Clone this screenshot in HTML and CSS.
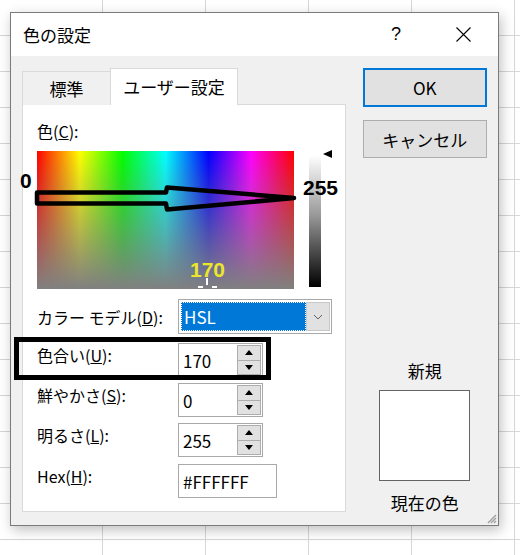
FILE: index.html
```html
<!DOCTYPE html>
<html lang="ja">
<head>
    <meta charset="UTF-8">
    <title>色の設定</title>
    <link rel="stylesheet" href="styles.css">
</head>
<body>
    <div class="dialog">
        <div class="titlebar">
            <span class="title">色の設定</span>
            <span class="help">?</span>
            <svg class="close" width="15" height="15" viewBox="0 0 15 15">
                <path d="M0.5 0.5 L14.5 14.5 M14.5 0.5 L0.5 14.5" stroke="#000" stroke-width="1.1" fill="none"/>
            </svg>
        </div>

        <div class="dialog-body">
            <div class="left">
                <div class="tabs">
                    <div class="tab">標準</div>
                    <div class="tab active">ユーザー設定</div>
                </div>
                <div class="panel">
                    <div class="caption">色(<u>C</u>):</div>

                    <div class="picker">
                        <div class="spectrum">
                            <span class="cursor-v"></span>
                            <span class="cursor-h left"></span>
                            <span class="cursor-h right"></span>
                        </div>
                        <div class="lum"></div>
                        <div class="lum-marker"></div>
                    </div>

                    <div class="form">
                        <div class="form-row model">
                            <label>カラー モデル(<u>D</u>):</label>
                            <div class="select">
                                <div class="selected"><span>HSL</span></div>
                                <div class="drop">
                                    <svg width="10" height="6" viewBox="0 0 10 6">
                                        <path d="M1 1 L5 5 L9 1" stroke="#606060" stroke-width="1" fill="none"/>
                                    </svg>
                                </div>
                            </div>
                        </div>
                        <div class="form-row">
                            <label>色合い(<u>U</u>):</label>
                            <div class="field">
                                <span class="value">170</span>
                                <div class="spinner"><span class="up"></span><span class="down"></span></div>
                            </div>
                        </div>
                        <div class="form-row">
                            <label>鮮やかさ(<u>S</u>):</label>
                            <div class="field">
                                <span class="value">0</span>
                                <div class="spinner"><span class="up"></span><span class="down"></span></div>
                            </div>
                        </div>
                        <div class="form-row">
                            <label>明るさ(<u>L</u>):</label>
                            <div class="field">
                                <span class="value">255</span>
                                <div class="spinner"><span class="up"></span><span class="down"></span></div>
                            </div>
                        </div>
                        <div class="form-row hex">
                            <label>Hex(<u>H</u>):</label>
                            <div class="field wide">
                                <span class="value">#FFFFFF</span>
                            </div>
                        </div>
                    </div>
                </div>
            </div>

            <div class="side">
                <div class="btn btn-ok">OK</div>
                <div class="btn btn-cancel">キャンセル</div>
                <div class="preview-label">新規</div>
                <div class="preview-box"></div>
                <div class="current-label">現在の色</div>
            </div>
        </div>

        <svg class="grip" width="12" height="12" viewBox="0 0 12 12">
            <path d="M11 3 L3 11 M11 6 L6 11 M11 9 L9 11" stroke="#a0a0a0" stroke-width="1.4"/>
        </svg>
    </div>

    <!-- annotations drawn over the screenshot -->
    <svg class="annotations" width="520" height="555" viewBox="0 0 520 555">
        <path d="M37 192.5 L166 192.5 L167 187.5 L294 198 L167 209.5 L166 203.5 L37 203.5 Z"
              fill="none" stroke="#000" stroke-width="4.5" stroke-linejoin="round"/>
        <rect x="16.5" y="339.5" width="252" height="38" fill="none" stroke="#000" stroke-width="5"/>
        <text x="20" y="188" class="note">0</text>
        <text x="303" y="195" class="note">255</text>
        <text x="190" y="277" class="note yellow">170</text>
    </svg>
</body>
</html>
```

FILE: styles.css
```css
* {
    box-sizing: border-box;
}

body {
    margin: 0;
    width: 520px;
    height: 555px;
    overflow: hidden;
    font-family: "Noto Sans CJK JP", sans-serif;
    font-size: 16px;
    color: #000;
    background-color: #fff;
    background-image:
        linear-gradient(to right, transparent 102px, #d6d6d6 102px),
        linear-gradient(to bottom, transparent 35px, #d6d6d6 35px);
    background-size: 103px 36px;
}

.dialog {
    position: relative;
    margin: 12px 0 0 10px;
    width: 489px;
    height: 514px;
    border: 1px solid #7a7a7a;
    background: #f0f0f0;
    box-shadow: 2px 4px 12px rgba(0, 0, 0, 0.25);
    display: flex;
    flex-direction: column;
}

.titlebar {
    height: 43px;
    background: #fff;
    display: flex;
    align-items: center;
    padding-left: 12px;
}

.title {
    font-size: 17px;
}

.help {
    margin-left: auto;
    width: 20px;
    text-align: center;
    font-family: "Liberation Sans", sans-serif;
    font-size: 18px;
}

.close {
    margin-left: 50px;
    margin-right: 27px;
}

.dialog-body {
    display: flex;
    padding: 12px 11px 0 11px;
}

.left {
    width: 325px;
}

.tabs {
    display: flex;
    align-items: flex-end;
    height: 37px;
    margin-bottom: -1px;
    position: relative;
    z-index: 1;
}

.tab {
    height: 34px;
    width: 88px;
    border: 1px solid #d9d9d9;
    border-right: none;
    border-bottom: none;
    background: #f0f0f0;
    display: flex;
    align-items: center;
    justify-content: center;
    font-size: 17px;
}

.tab.active {
    height: 37px;
    width: 128px;
    border-right: 1px solid #d9d9d9;
    background: #fff;
    padding-bottom: 2px;
}

.panel {
    height: 408px;
    border: 1px solid #d9d9d9;
    background: #fff;
    padding-left: 14px;
    padding-top: 15px;
}

.caption {
    line-height: 22px;
}

.picker {
    display: flex;
    margin-top: 9px;
    height: 138px;
}

.spectrum {
    position: relative;
    width: 257px;
    height: 138px;
    background:
        linear-gradient(to bottom, rgba(128, 128, 128, 0), #808080),
        linear-gradient(to right, #ff0000, #ffff00 16.7%, #00ff00 33.3%, #00ffff 50%, #0000ff 66.7%, #ff00ff 83.3%, #ff0000);
}

.cursor-v {
    position: absolute;
    left: 169px;
    top: 127px;
    width: 2px;
    height: 7px;
    background: #fff;
}

.cursor-h {
    position: absolute;
    top: 135px;
    width: 5px;
    height: 2px;
    background: #fff;
}

.cursor-h.left {
    left: 161px;
}

.cursor-h.right {
    left: 175px;
}

.lum {
    width: 12px;
    height: 132px;
    margin-left: 15px;
    margin-top: 4px;
    background: linear-gradient(to bottom, #fff, #9a9a9a 45%, #000);
}

.lum-marker {
    width: 0;
    height: 0;
    margin-left: 2px;
    margin-top: -1px;
    border-right: 9px solid #000;
    border-top: 4px solid transparent;
    border-bottom: 4px solid transparent;
}

.form {
    margin-top: 10px;
    display: flex;
    flex-direction: column;
    gap: 6px;
}

.form-row {
    display: flex;
    align-items: flex-start;
    height: 34px;
}

.form-row label {
    width: 141px;
    line-height: 22px;
    margin-top: 1px;
}

.form-row.model {
    height: 35px;
    align-items: center;
    margin-bottom: 3px;
}

.form-row.model label {
    margin-top: 0;
}

.form-row.hex {
    margin-top: 1px;
}

.select {
    width: 154px;
    height: 35px;
    border: 1px solid #a9a9a9;
    background: #fff;
    display: flex;
    padding: 2px 1px 2px 2px;
}

.selected {
    flex: 1;
    background: #0078d7;
    border: 1px dotted #fff;
    color: #fff;
    font-size: 17px;
    display: flex;
    align-items: center;
    padding-left: 2px;
}

.drop {
    width: 24px;
    background: #e1e1e1;
    border: 1px solid #c8c8c8;
    display: flex;
    align-items: center;
    justify-content: center;
}

.field {
    width: 85px;
    height: 34px;
    border: 1px solid #a9a9a9;
    background: #fff;
    display: flex;
    align-items: center;
    padding: 1px 1px 1px 4px;
    font-size: 17px;
}

.field.wide {
    width: 99px;
}

.spinner {
    margin-left: auto;
    width: 24px;
    height: 30px;
    display: flex;
    flex-direction: column;
}

.spinner span {
    flex: 1;
    background: #e1e1e1;
    border: 1px solid #adadad;
    display: flex;
    align-items: center;
    justify-content: center;
}

.spinner .down {
    border-top: none;
}

.spinner .up::after {
    content: '';
    border-left: 4px solid transparent;
    border-right: 4px solid transparent;
    border-bottom: 5px solid #000;
}

.spinner .down::after {
    content: '';
    border-left: 4px solid transparent;
    border-right: 4px solid transparent;
    border-top: 5px solid #000;
}

.side {
    margin-left: 17px;
    width: 125px;
    display: flex;
    flex-direction: column;
}

.btn {
    height: 39px;
    border: 1px solid #adadad;
    background: #e1e1e1;
    display: flex;
    align-items: center;
    justify-content: center;
    font-size: 17px;
}

.btn-ok {
    border: 2px solid #0078d7;
}

.btn-cancel {
    height: 38px;
    margin-top: 13px;
}

.preview-label {
    margin-top: 202px;
    line-height: 22px;
    text-align: center;
    font-size: 17px;
}

.preview-box {
    width: 91px;
    height: 91px;
    margin: 8px auto 0;
    border: 1px solid #646464;
    background: #fff;
}

.current-label {
    margin-top: 11px;
    line-height: 22px;
    text-align: center;
    font-size: 17px;
}

.grip {
    position: absolute;
    right: 1px;
    bottom: 1px;
}

.annotations {
    position: absolute;
    left: 0;
    top: 0;
    pointer-events: none;
}

.note {
    font-family: "Liberation Sans", sans-serif;
    font-weight: bold;
    font-size: 21px;
    fill: #000;
}

.note.yellow {
    fill: #ebe62a;
}
```
